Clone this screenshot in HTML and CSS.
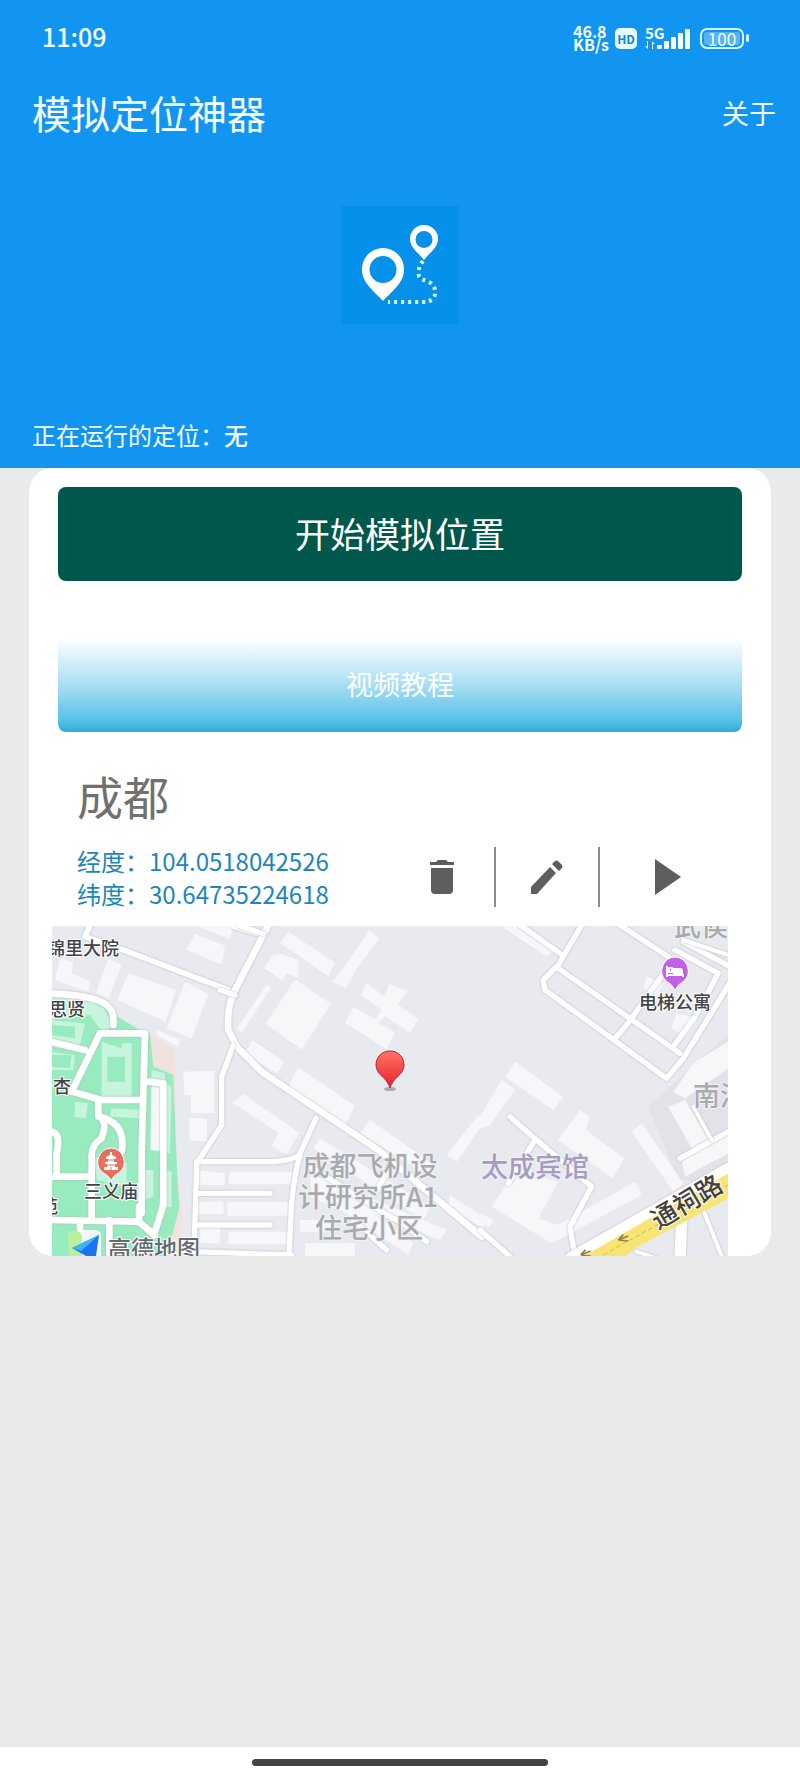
FILE: index.html
```
<!DOCTYPE html>
<html lang="zh-CN">
<head>
    <meta charset="utf-8">
    <meta name="viewport" content="width=device-width,initial-scale=1">
    <title>模拟定位神器</title>
    <link rel="stylesheet" href="styles.css">
</head>
<body>
    <header class="header">
        <div class="status">
            <span class="time">11:09</span>
            <div class="status-icons">
                <div class="speed"><span>46.8</span><span>KB/s</span></div>
                <span class="hd">HD</span>
                <div class="signal">
                    <span class="network">5G</span>
                    <svg width="45" height="23" viewBox="0 0 45 23" fill="currentColor" aria-hidden="true">
                        <path d="M3 14v8l-3-3h2v-5zM7 22v-8l3 3H8v5z"/>
                        <rect x="12" y="18" width="5" height="4" rx="1"/>
                        <rect x="19" y="14" width="5" height="8" rx="1"/>
                        <rect x="26" y="10" width="5" height="12" rx="1"/>
                        <rect x="33" y="6" width="5" height="16" rx="1"/>
                        <rect x="40" y="2" width="5" height="20" rx="1"/>
                    </svg>
                </div>
                <div class="battery-wrap">
                    <span class="battery">100</span>
                    <span class="battery-tip"></span>
                </div>
            </div>
        </div>
        <div class="title-bar">
            <h1>模拟定位神器</h1>
            <button type="button" class="about">关于</button>
        </div>
        <svg class="logo" viewBox="0 0 118 118" aria-hidden="true">
            <rect width="118" height="118" fill="#0590e9"/>
            <path fill="#fff" fill-rule="evenodd" d="M42 42a21 21 0 0 0-21 22c0 13 13 22 21 31 8-9 21-18 21-31a21 21 0 0 0-21-22zm0 8a13 13 0 1 1 0 27 13 13 0 0 1 0-27z"/>
            <path fill="#fff" fill-rule="evenodd" d="M83 19a14 14 0 0 0-14 14c0 9 9 14 14 21 5-7 14-12 14-21a14 14 0 0 0-14-14zm0 6a8 8 0 1 1 0 17 8 8 0 0 1 0-17z"/>
            <path fill="none" stroke="#d9fbff" stroke-width="4" stroke-dasharray="3 4" d="M82 55c-4 5-5 10-4 15 2 4 6 4 10 6 8 4 8 15 2 18-2 2-4 2-7 2H47"/>
        </svg>
        <p class="running">正在运行的定位：<b>无</b></p>
    </header>

    <main class="card">
        <button type="button" class="btn btn-start">开始模拟位置</button>
        <button type="button" class="btn btn-video">视频教程</button>

        <h2>成都</h2>
        <div class="info">
            <p class="coords">经度：104.0518042526<br>纬度：30.64735224618</p>
            <div class="actions">
                <button type="button" aria-label="删除">
                    <svg width="26" height="36" viewBox="0 0 26 36"><path d="M1 3h6l2-2h8l2 2h6v3H1zM2 9h22v22q0 4-4 4H6q-4 0-4-4z"/></svg>
                </button>
                <button type="button" aria-label="编辑">
                    <svg width="34" height="36" viewBox="0 0 34 36"><path d="M1 28 20 8l6 6L7 35H1zM22 5l3-3q2-1 3 0l4 4q1 2 0 3l-3 3z"/></svg>
                </button>
                <button type="button" class="play" aria-label="开始">
                    <svg width="26" height="36" viewBox="0 0 26 36"><path d="M0 0l26 18L0 36z"/></svg>
                </button>
            </div>
        </div>

        <svg class="map" viewBox="0 0 676 330" role="img" aria-label="地图">
            <defs>
                <linearGradient id="pin" x1="0" y1="0" x2="0" y2="1">
                    <stop offset="0" stop-color="#ff7468"/>
                    <stop offset="1" stop-color="#e81f2b"/>
                </linearGradient>
            </defs>
            <rect width="676" height="330" fill="#e9eaef"/>

            <!-- park -->
            <g transform="translate(-32 -16) scale(.3333)">
                <path class="peach" d="M340 380l50-10 75 50 5 360 20 130-20 140h-70z"/>
                <path class="green" d="M90 245l120 20 60 40 80 50 40 15 10 100 60 25 10 260 8 140-40 150H90z"/>
                <path class="lawn" d="M90 250l110 15 50 30 30 50-30 25-40-55-120 15zM245 395l30 10 30 10v-15h30v160h-90zM275 595l90 5v25l-95-5zM165 575l38 5-5 45-35-5zM395 480l40 10v30l20 10-5 200-60-10zM370 780h30v80l-30 10zM435 780l20 5v105h-40zM220 740l100 20v70l-90-20zM90 330l105 10-15 65-90-15zM90 425l75 10-5 45h-70z"/>
                <path class="green" d="M262 440h53v75h-53zM95 345l70 5v35l-70-10zM95 435h60l-5 40-55-5z"/>
                <path class="building" d="M395 530h28v190h-30zM490 485l93-2v127h-70v-55h-20zM508 622l53 5v68l-53-4zM325 190l142 50-30 95-145-65zM495 215l70 38-50 132-75-30zM265 145l40 20-40 100-37-15zM120 145l40 10-5 35 55 25-5 30-100-35zM525 72l90 35-10 57-105-45zM410 360l70 30-5 20-65-35zM530 48h110l-10 40zM775 130l60 20v55l-100-40zM530 780l85 10v35h-85zM630 785h200v38H625zM530 875h80v37h-80zM622 877h190v40H622zM540 950h60v50h-60zM625 965h190v38H625z"/>
                <path class="road" stroke-width="20" d="M90 250q130 5 170 35 25 20 20 60M155 545l85-175h135l-10 360v180M155 545l90 25h125M90 395l105 25M385 515l45 5v365l-28 90-45-40V890M235 570v50q30 10 10 65-30 20-30 50v195M240 620q80 20 65 105M100 800h115M90 930l265 5 50 40M180 930v70M268 930v100M90 665q35 0 20 65v60"/>
                <path class="road" stroke-width="17" d="M210 45l-15 35 120 42 330 125M640 48l80 25"/>
            </g>

            <!-- buildings and lanes, centre -->
            <g transform="translate(168 -16) scale(.3333)">
                <path class="building" d="M205 65l140 93-20 40-145-100zM445 60l33 25-70 95-30 55-40-20 45-60 60-85zM160 132l52 38-25 42-55-38zM225 208l108 73-88 138-107-78zM140 225l15 5-90 138-15-12zM97 390l95 65-20 35-97-60zM235 472l170 115-28 57-175-110zM70 553l168 115-38 65-45-25 20-40-138-90zM440 220l55 40 12-37 55 20-30 40 63 45-25 40-75-50-20 20 50 30-25 50-125-80 25-48 65 38 20-28-62-45zM450 630l200 140-20 30-210-130zM775 615l15 25-80 115-30-20zM300 685l330 205-20 40-330-215zM270 790l410 170-20 30-200-80 120 90-15 35-210-140-80-30zM240 930h90v35h-90zM255 1000h150v40H255zM690 855l100 65v35l-105-65z"/>
                <path class="road" stroke-width="20" d="M145 45L45 240q-25 50-20 120l25 50 75 75 350 235 310 260"/>
                <path class="road" stroke-width="16" d="M40 405L5 500v145l-75 115-8 270M0 240l45 15M60 48l70 23M-70 755h230q60-5 78-20l50-110M240 735q-15 50-25 140l-8 155M-85 1025l300 10M-70 850h220M-70 945h220M270 770l240 150 30 15 80 60M500 790l-35 60M400 930l100 90"/>
            </g>

            <!-- right side -->
            <g transform="translate(428 -16) scale(.3333)">
                <path class="shade" d="M745 370v450l-150-10-90-220z"/>
                <path class="building" d="M60 45h60l100 75-20 20zM105 455l145 105-30 40-145-100zM65 510l40 30-75 105-60 25zM300 600l28 20-10 40 115 85-35 60-165-115zM485 640l125 180-30 25-125-180zM565 590l50-20 75 125-55 20zM640 460l105-65v80l-130 90-35-20zM605 750l140-80v60l-130 70zM110 780l125 35-60 110 60 20 230-130 20 40-270 145-180-110zM500 200l50 20-20 35-40-20zM590 310l65 15-35 55-45-25zM0 910l40 20-10 20-35-10z"/>
                <path class="road" stroke-width="16" d="M305 45l-70 120-45 45 5 30 365 265 50-60 145-235M235 175l365 255M120 45l120 85M420 45l160 105-140 195-35 40M585 120l130 70-70 130-65 90M610 95l140 75M600 745l145-80M90 620l80 70 165 140-65 120 15 90M165 690l-80 130M0 960l90 80"/>
                <path class="road" stroke-width="34" d="M270 1045l475-270M605 930l-5 120"/>
                <path class="road" stroke-width="12" d="M670 900l60 150M470 1025l60 20M640 590l55 100M610 90l135 45"/>
                <path class="main-road" d="M300 1045l70-40 375-215v75L465 1015l-35 30z"/>
                <path class="lane" d="M370 1035l375-210"/>
                <path class="arrow" d="M415 990l30-12M415 990l15-16M415 990l30 3M302 1035l30-12M302 1035l15-16M302 1035l30 3"/>
            </g>

            <text class="place" x="-5" y="29">锦里大院</text>
            <text class="place" x="-3" y="90">思贤</text>
            <text class="place" x="1" y="167">杏</text>
            <text class="place" x="-12" y="287">苑</text>
            <text class="place" x="32" y="272">三义庙</text>
            <text class="place" x="587" y="83">电梯公寓</text>
            <text class="area" x="622" y="10">武侯</text>
            <text class="area" x="641" y="180">南浦</text>
            <text class="area middle" x="318" y="250">成都飞机设</text>
            <text class="area middle" x="316" y="281">计研究所A1</text>
            <text class="area middle" x="317" y="312">住宅小区</text>
            <text class="area hotel" x="429" y="251">太成宾馆</text>
            <text class="street" transform="translate(606 304) rotate(-31)">通祠路</text>

            <!-- temple -->
            <path fill="#e86f5e" stroke="#fff" stroke-width="1" d="M59 222a14 14 0 0 1 9 24q-6 3-9 8-3-5-9-8a14 14 0 0 1 9-24z"/>
            <path fill="#fff" d="M58 226h2v3l4 2v2h-2v3h3v2h-2v3h3v3H52v-3h3v-3h-2v-2h3v-3h-2v-2l4-2z"/>
            <path fill="none" stroke="#e86f5e" stroke-width="1" d="M56 234h6M55 239h8M59 241v3"/>
            <!-- apartment -->
            <path fill="#c45fe9" stroke="#fff" stroke-width="1" d="M623 31a14 14 0 0 1 9 24q-6 3-9 9-3-6-9-9a14 14 0 0 1 9-24z"/>
            <path fill="none" stroke="#fff" stroke-width="2" d="M615 40v11M615 49h16v2M617 42h3v4h-3z"/>
            <path fill="#fff" d="M621 42h7q3 0 3 3v5h-10z"/>
            <!-- current position -->
            <ellipse cx="338" cy="163" rx="6" ry="2" fill="#a9abb0"/>
            <path fill="url(#pin)" stroke="#bb2732" stroke-width="1" d="M338 125c8 0 14 6 14 14 0 10-11 12-14 23-3-11-14-13-14-23 0-8 6-14 14-14z"/>

            <!-- AMap mark -->
            <path fill="#b9f29a" d="M16 307q10-6 14 3l-1 20H17z"/>
            <path fill="#f4f7fa" d="M30 304h14q5 1 5 6v20H30z"/>
            <path fill="#1976ee" d="M47 309L20 322l14 8h10z"/>
            <path fill="#39b5fa" d="M47 309L20 322l9 3z"/>
            <text class="amap" x="56" y="331">高德地图</text>
        </svg>
    </main>

    <footer class="nav-bar"><span class="nav-handle"></span></footer>
</body>
</html>
```
FILE: styles.css
```
* {
    box-sizing: border-box;
}

body {
    display: flex;
    flex-direction: column;

    min-height: 100vh;
    margin: 0;

    font-family: "Noto Sans CJK SC", sans-serif;
    background-color: #eaeaea;
}

h1, h2, p {
    margin: 0;
    font-weight: normal;
}

button {
    padding: 0;
    border: 0;

    font-family: inherit;
    color: inherit;
    background: none;
}

.header {
    display: flex;
    flex-direction: column;

    padding-bottom: 15px;

    color: #f4ffff;
    background-color: #1295f1;
}

/* status bar */
.status {
    display: flex;
    justify-content: space-between;
    align-items: center;

    height: 76px;
    padding: 0 51px 0 42px;
}

.time {
    padding-bottom: 4px;

    font-size: 25px;
    font-weight: 500;
}

.status-icons {
    display: flex;
    align-items: center;
    gap: 6px;
}

.speed {
    display: flex;
    flex-direction: column;

    font-size: 16px;
    font-weight: bold;
    line-height: 13px;
}

.hd {
    width: 22px;
    margin-right: 2px;

    border-radius: 5px;

    font-size: 12px;
    font-weight: bold;
    line-height: 21px;
    color: #1285d8;
    text-align: center;
    background-color: #e4fbff;
}

.signal {
    position: relative;
    height: 23px;
}

.network {
    position: absolute;
    top: 0;
    left: 0;

    font-size: 15px;
    font-weight: bold;
    line-height: 11px;
}

.battery-wrap {
    display: flex;
    align-items: center;
    gap: 2px;
    margin-left: 4px;
}

.battery {
    width: 44px;

    border: 2px solid #d5f7ff;
    border-radius: 7px;

    font-size: 17px;
    line-height: 17px;
    text-align: center;
    background-color: #58b3f4;
    box-shadow: inset 0 0 0 2px #1295f1;
}

.battery-tip {
    width: 3px;
    height: 8px;

    border-radius: 2px;

    background-color: #d5f7ff;
}

.title-bar {
    display: flex;
    justify-content: space-between;
    align-items: center;

    height: 72px;
    padding: 0 24px 0 32px;
}

h1 {
    font-size: 39px;
}

.about {
    font-size: 27px;
}

.logo {
    align-self: center;

    width: 118px;
    margin: 58px 0 93px;
}

.running {
    padding: 0 32px;

    font-size: 24px;
    line-height: 36px;
}

.running b {
    font-weight: 500;
}

/* main card */
.card {
    overflow: hidden;

    margin: 0 29px;
    padding-top: 19px;

    border-radius: 24px;

    background-color: #ffffff;
}

.btn {
    display: block;

    width: calc(100% - 58px);
    height: 94px;
    margin: 0 29px;
    padding-bottom: 4px;

    border-radius: 8px;

    color: #ffffff;
}

.btn-start {
    font-size: 35px;
    background-color: #00584c;
}

.btn-video {
    margin-top: 57px;

    font-size: 27px;
    background: linear-gradient(#ffffff, #a9def2 50%, #5cc4ea 85%, #33abdd);
}

h2 {
    margin: 29px 48px 0;

    font-size: 46px;
    line-height: 68px;
    color: #707070;
}

.info {
    display: flex;
    justify-content: space-between;
    align-items: center;

    margin-top: 15px;
    padding: 0 35px 0 48px;
}

.coords {
    font-size: 24px;
    line-height: 33px;
    color: #1d86bd;
}

.actions {
    display: flex;
}

.actions button {
    display: grid;
    place-items: center;

    width: 104px;
    height: 60px;
}

.actions button + button {
    border-left: 2px solid #8c8c8c;
}

.actions .play {
    width: 138px;
}

.actions svg {
    fill: #5e5e5e;
}

/* map */
.map {
    display: block;

    width: calc(100% - 66px);
    margin: 16px 43px 0 23px;
}

.green {
    fill: #98ebbf;
}

.lawn {
    fill: #c6f4dc;
}

.peach {
    fill: #f1e2df;
}

.building {
    fill: #f7f7fa;
}

.shade {
    fill: #e2e3e9;
}

.road {
    fill: none;
    stroke: #ffffff;
    stroke-linecap: round;
    stroke-linejoin: round;
    filter: drop-shadow(0 0 3px #b4b7bf);
}

.main-road {
    fill: #f7e573;
}

.lane {
    fill: none;
    stroke: #b0a55c;
    stroke-width: 2;
    stroke-dasharray: 14 8;
}

.arrow {
    fill: none;
    stroke: #8f8440;
    stroke-width: 5;
}

.map text {
    stroke: #ffffff;
    stroke-width: 2px;
    paint-order: stroke;
}

.place {
    font-size: 18px;
    font-weight: 500;
    fill: #40434a;
}

.map .area {
    font-size: 27px;
    font-weight: 500;
    fill: #a8aaae;
    stroke: #f1f2f5;
}

.map .hotel {
    fill: #a89bc2;
}

.middle {
    text-anchor: middle;
}

.street {
    font-size: 26px;
    font-weight: 500;
    fill: #45423c;
}

.amap {
    font-size: 23px;
    font-weight: 500;
    fill: #626a70;
}

/* system navigation */
.nav-bar {
    display: flex;
    justify-content: center;
    align-items: center;

    height: 31px;
    margin-top: auto;

    background-color: #ffffff;
}

.nav-handle {
    width: 37%;
    height: 7px;

    border-radius: 4px;

    background-color: #444444;
}
```
